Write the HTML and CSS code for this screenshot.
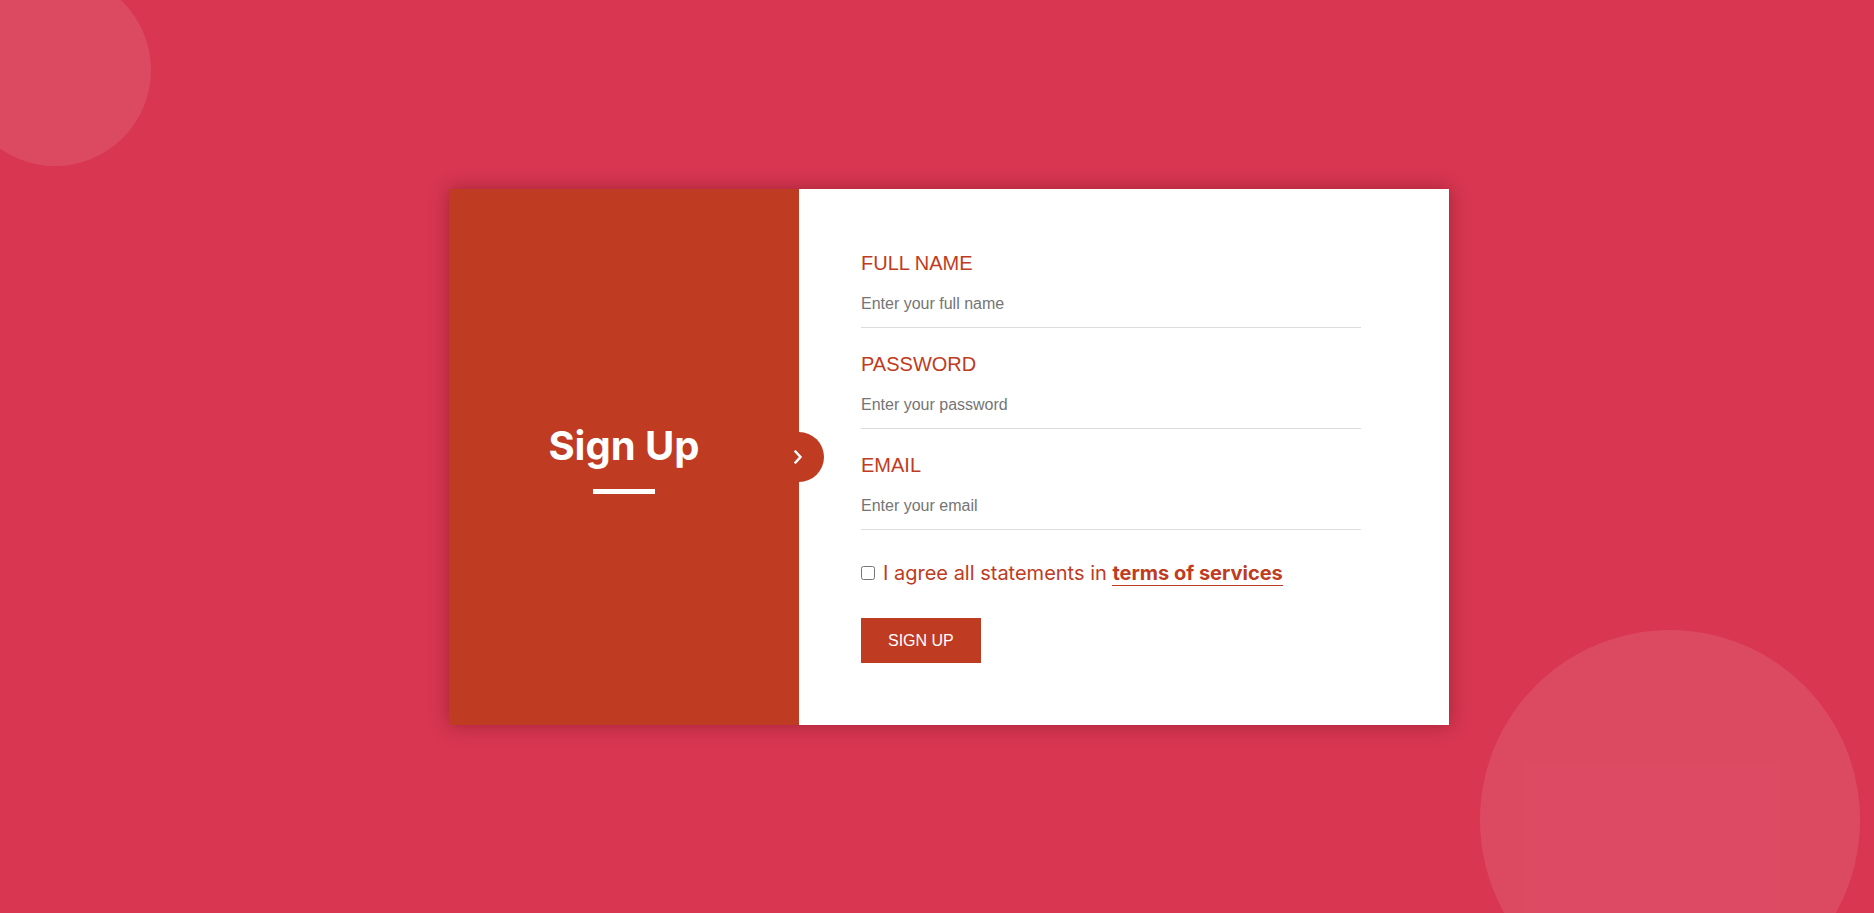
FILE: index.html
```html
<!DOCTYPE html>
<html lang="en">
<head>
<meta charset="utf-8">
<title>Sign Up</title>
<link rel="stylesheet" href="styles.css">
</head>
<body>
<div class="backdrop">
  <div class="bubble bubble-top"></div>
  <div class="bubble bubble-bottom"></div>
</div>
<main class="stage">
  <section class="card">
    <div class="card-side">
      <h1 class="side-title">Sign Up</h1>
      <span class="side-bar"></span>
      <span class="side-arrow">
        <svg width="12" height="14" viewBox="0 0 12 14"><polyline points="3.5,1.5 8.5,7 3.5,12.5" fill="none" stroke="#fff" stroke-width="2.4" stroke-linecap="square"/></svg>
      </span>
    </div>
    <div class="card-main">
      <form class="form">
        <div class="field">
          <label class="field-label" for="fullname">FULL NAME</label>
          <input class="field-input" id="fullname" type="text" placeholder="Enter your full name">
        </div>
        <div class="field">
          <label class="field-label" for="password">PASSWORD</label>
          <input class="field-input" id="password" type="password" placeholder="Enter your password">
        </div>
        <div class="field">
          <label class="field-label" for="email">EMAIL</label>
          <input class="field-input" id="email" type="email" placeholder="Enter your email">
        </div>
        <label class="agree">
          <input class="agree-box" type="checkbox">
          <span>I agree all statements in <a class="agree-link" href="#">terms of services</a></span>
        </label>
        <button class="submit" type="button">SIGN UP</button>
      </form>
    </div>
  </section>
</main>
</body>
</html>
```

FILE: styles.css
```css
* { box-sizing: border-box; }

html, body {
  margin: 0;
  height: 100%;
  overflow: hidden;
}

body {
  background: #d83651;
  position: relative;
  font-family: "Liberation Sans", Arial, sans-serif;
}

.backdrop {
  position: absolute;
  inset: 0;
  overflow: hidden;
}

.bubble {
  position: absolute;
  border-radius: 50%;
  background: rgba(255, 255, 255, 0.1);
}

.bubble-top {
  width: 192px;
  height: 192px;
  left: -41px;
  top: -26px;
}

.bubble-bottom {
  width: 380px;
  height: 380px;
  left: 1480px;
  top: 630px;
}

.stage {
  position: relative;
  height: 100%;
  display: flex;
  align-items: center;
  justify-content: center;
  padding-left: 24px;
}

.card {
  width: 1000px;
  display: flex;
  background: #fff;
  box-shadow: 0 0 18px rgba(60, 0, 10, 0.35);
}

.card-side {
  position: relative;
  width: 350px;
  flex: none;
  background: #bf3b22;
  display: flex;
  flex-direction: column;
  align-items: center;
  justify-content: center;
  padding-top: 2px;
}

.side-title {
  margin: 0 0 19px;
  font-family: Inter, "Liberation Sans", sans-serif;
  font-weight: 700;
  font-size: 40px;
  line-height: 48px;
  color: #fff;
}

.side-bar {
  display: block;
  width: 62px;
  height: 5px;
  background: #fff;
}

.side-arrow {
  position: absolute;
  right: -25px;
  top: 50%;
  width: 50px;
  height: 50px;
  margin-top: -25px;
  border-radius: 50%;
  background: #bf3b22;
  display: flex;
  align-items: center;
  justify-content: center;
  padding-right: 3px;
}

.side-arrow svg { display: block; }

.card-main {
  flex: 1;
  padding: 63px 0 62px 62px;
}

.form {
  width: 500px;
  display: flex;
  flex-direction: column;
  align-items: flex-start;
}

.field {
  width: 100%;
  margin-bottom: 25px;
}

.field-label {
  display: block;
  font-size: 20px;
  line-height: 23px;
  color: #bf3b22;
  margin-bottom: 9px;
}

.field-input {
  display: block;
  width: 100%;
  border: none;
  border-bottom: 1px solid #dcdcdc;
  padding: 11px 0 14px;
  font-family: "Liberation Sans", Arial, sans-serif;
  font-size: 16px;
  line-height: 18px;
  color: #333;
  outline: none;
  background: transparent;
}

.field-input::placeholder { color: #757575; }

.agree {
  display: flex;
  align-items: center;
  margin-top: 6px;
  font-family: Inter, "Liberation Sans", sans-serif;
  font-size: 20px;
  line-height: 24px;
  color: #bf3b22;
}

.agree-box {
  width: 14px;
  height: 14px;
  margin: 0 8px 0 0;
}

.agree-link {
  color: #bf3b22;
  font-weight: 700;
  text-decoration: none;
  border-bottom: 1px solid #bf3b22;
}

.submit {
  margin-top: 33px;
  border: none;
  background: #bf3b22;
  color: #fff;
  font-family: "Liberation Sans", Arial, sans-serif;
  font-size: 16px;
  line-height: 19px;
  padding: 13px 27px;
  cursor: pointer;
}
```
